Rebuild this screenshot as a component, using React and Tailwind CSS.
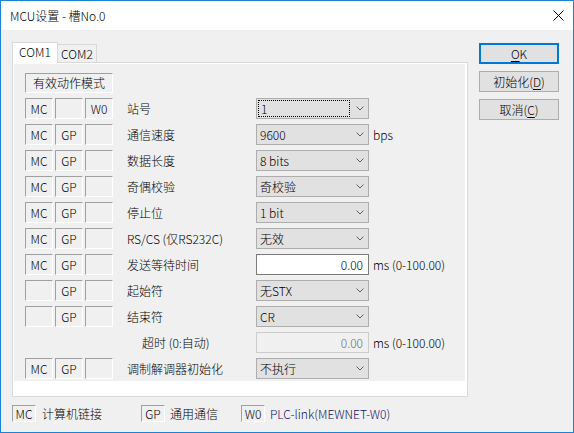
import React from "react";

const Chevron = () => (
  <svg width="8" height="5" viewBox="0 0 8 5" className="shrink-0">
    <polyline points="0.5,0.5 4,4 7.5,0.5" fill="none" stroke="#606060" strokeWidth="1" />
  </svg>
);

const SBox = ({ t, w = "w-[28px]", h = "h-[21px]" }) => (
  <div
    className={`${w} ${h} shrink-0 flex items-center justify-center border border-t-[#a0a0a0] border-l-[#a0a0a0] border-r-white border-b-white leading-[14px]`}
  >
    {t}
  </div>
);

const Combo = ({ v, focus }) => (
  <div className="w-[113px] h-[21px] shrink-0 bg-[#e1e1e1] border border-[#adadad] flex items-center justify-between pl-[3px] pr-[4px] leading-[14px]">
    {focus ? (
      <div className="w-[92px] h-[17px] -ml-[2px] border border-dotted border-black flex items-center pl-[2px]">
        {v}
      </div>
    ) : (
      <span>{v}</span>
    )}
    <Chevron />
  </div>
);

const rows = [
  { b: ["MC", "", "W0"], l: "站号", v: "1", focus: true },
  { b: ["MC", "GP", ""], l: "通信速度", v: "9600", u: "bps" },
  { b: ["MC", "GP", ""], l: "数据长度", v: "8 bits" },
  { b: ["MC", "GP", ""], l: "奇偶校验", v: "奇校验" },
  { b: ["MC", "GP", ""], l: "停止位", v: "1 bit" },
  { b: ["MC", "GP", ""], l: "RS/CS (仅RS232C)", v: "无效" },
  { b: ["MC", "GP", ""], l: "发送等待时间", input: "0.00", u: "ms (0-100.00)" },
  { b: ["", "GP", ""], l: "起始符", v: "无STX" },
  { b: ["", "GP", ""], l: "结束符", v: "CR" },
  { b: null, l: "超时 (0:自动)", disabled: "0.00", u: "ms (0-100.00)" },
  { b: ["MC", "GP", ""], l: "调制解调器初始化", v: "不执行" },
];

export default function App() {
  return (
    <div className="w-[574px] h-[433px] border border-[#1883d7] bg-[#f0f0f0] flex flex-col text-[12px] font-light text-black font-['Noto_Sans_CJK_SC','Noto_Sans',sans-serif] overflow-hidden">
      {/* Title bar */}
      <div className="h-[29px] shrink-0 bg-white flex items-center justify-between pl-[9px] pr-[9px]">
        <span className="leading-[14px]">MCU设置 - 槽No.0</span>
        <svg width="11" height="11" viewBox="0 0 11 11">
          <line x1="0.5" y1="0.5" x2="10.5" y2="10.5" stroke="#000" strokeWidth="1" />
          <line x1="10.5" y1="0.5" x2="0.5" y2="10.5" stroke="#000" strokeWidth="1" />
        </svg>
      </div>

      {/* Body */}
      <div className="flex pl-[11px] pt-[12px]">
        <div className="flex flex-col w-[456px]">
          {/* Tabs */}
          <div className="flex items-start h-[20px]">
            <div className="relative z-10 w-[46px] h-[21px] bg-white border-l border-t border-r border-[#d9d9d9] flex items-start justify-center pt-[2px] leading-[14px]">
              COM1
            </div>
            <div className="mt-[2px] w-[39px] h-[18px] bg-[#f0f0f0] border-t border-r border-[#d9d9d9] flex items-center justify-center leading-[14px]">
              COM2
            </div>
          </div>
          {/* Panel */}
          <div className="h-[335px] bg-white border border-[#d9d9d9]">
            <div className="ml-[1px] mt-[1px] w-[451px] h-[317px] bg-[#f0f0f0] flex flex-col pl-[11px] pt-[9px]">
              <SBox t="有效动作模式" w="w-[88px]" h="h-[20px]" />
              <div className="flex flex-col mt-[5px]">
                {rows.map((r, i) => (
                  <div key={i} className="h-[26px] flex items-start">
                    {r.b ? (
                      <div className="flex gap-[2px] w-[88px]">
                        {r.b.map((t, j) => (
                          <SBox key={j} t={t} />
                        ))}
                      </div>
                    ) : (
                      <div className="w-[88px]" />
                    )}
                    <div
                      className={`w-[143px] h-[21px] flex items-center leading-[14px] ${
                        r.b ? "pl-[14px]" : "pl-[29px]"
                      }`}
                    >
                      {r.l}
                    </div>
                    {r.input ? (
                      <div className="w-[113px] h-[21px] shrink-0 bg-white border border-[#7a7a7a] flex items-center justify-end pr-[5px] leading-[14px]">
                        {r.input}
                      </div>
                    ) : r.disabled ? (
                      <div className="w-[113px] h-[21px] shrink-0 bg-[#f0f0f0] border border-[#cccccc] text-[#6d6d6d] flex items-center justify-end pr-[5px] leading-[14px]">
                        {r.disabled}
                      </div>
                    ) : (
                      <Combo v={r.v} focus={r.focus} />
                    )}
                    {r.u && (
                      <div className="h-[21px] ml-[4px] flex items-center leading-[14px]">{r.u}</div>
                    )}
                  </div>
                ))}
              </div>
            </div>
          </div>
        </div>

        {/* Buttons */}
        <div className="ml-[11px] mt-[1px] flex flex-col gap-[7px]">
          <div className="w-[80px] h-[21px] bg-[#e1e1e1] border-2 border-[#0078d7] flex items-center justify-center leading-[14px]">
            <span>
              <span className="underline underline-offset-2">O</span>K
            </span>
          </div>
          <div className="w-[80px] h-[21px] bg-[#e1e1e1] border border-[#adadad] flex items-center justify-center leading-[14px]">
            <span>
              初始化(<span className="underline underline-offset-2">D</span>)
            </span>
          </div>
          <div className="w-[80px] h-[21px] bg-[#e1e1e1] border border-[#adadad] flex items-center justify-center leading-[14px]">
            <span>
              取消(<span className="underline underline-offset-2">C</span>)
            </span>
          </div>
        </div>
      </div>

      {/* Legend */}
      <div className="flex items-center pl-[11px] mt-[8px]">
        <div className="w-[129px] flex items-center">
          <SBox t="MC" w="w-[24px]" h="h-[17px]" />
          <span className="ml-[6px] leading-[14px]">计算机链接</span>
        </div>
        <div className="w-[100px] flex items-center">
          <SBox t="GP" w="w-[24px]" h="h-[17px]" />
          <span className="ml-[5px] leading-[14px]">通用通信</span>
        </div>
        <div className="flex items-center">
          <SBox t="W0" w="w-[24px]" h="h-[17px]" />
          <span className="ml-[5px] leading-[14px] text-[#10106a]">PLC-link(MEWNET-W0)</span>
        </div>
      </div>
    </div>
  );
}
